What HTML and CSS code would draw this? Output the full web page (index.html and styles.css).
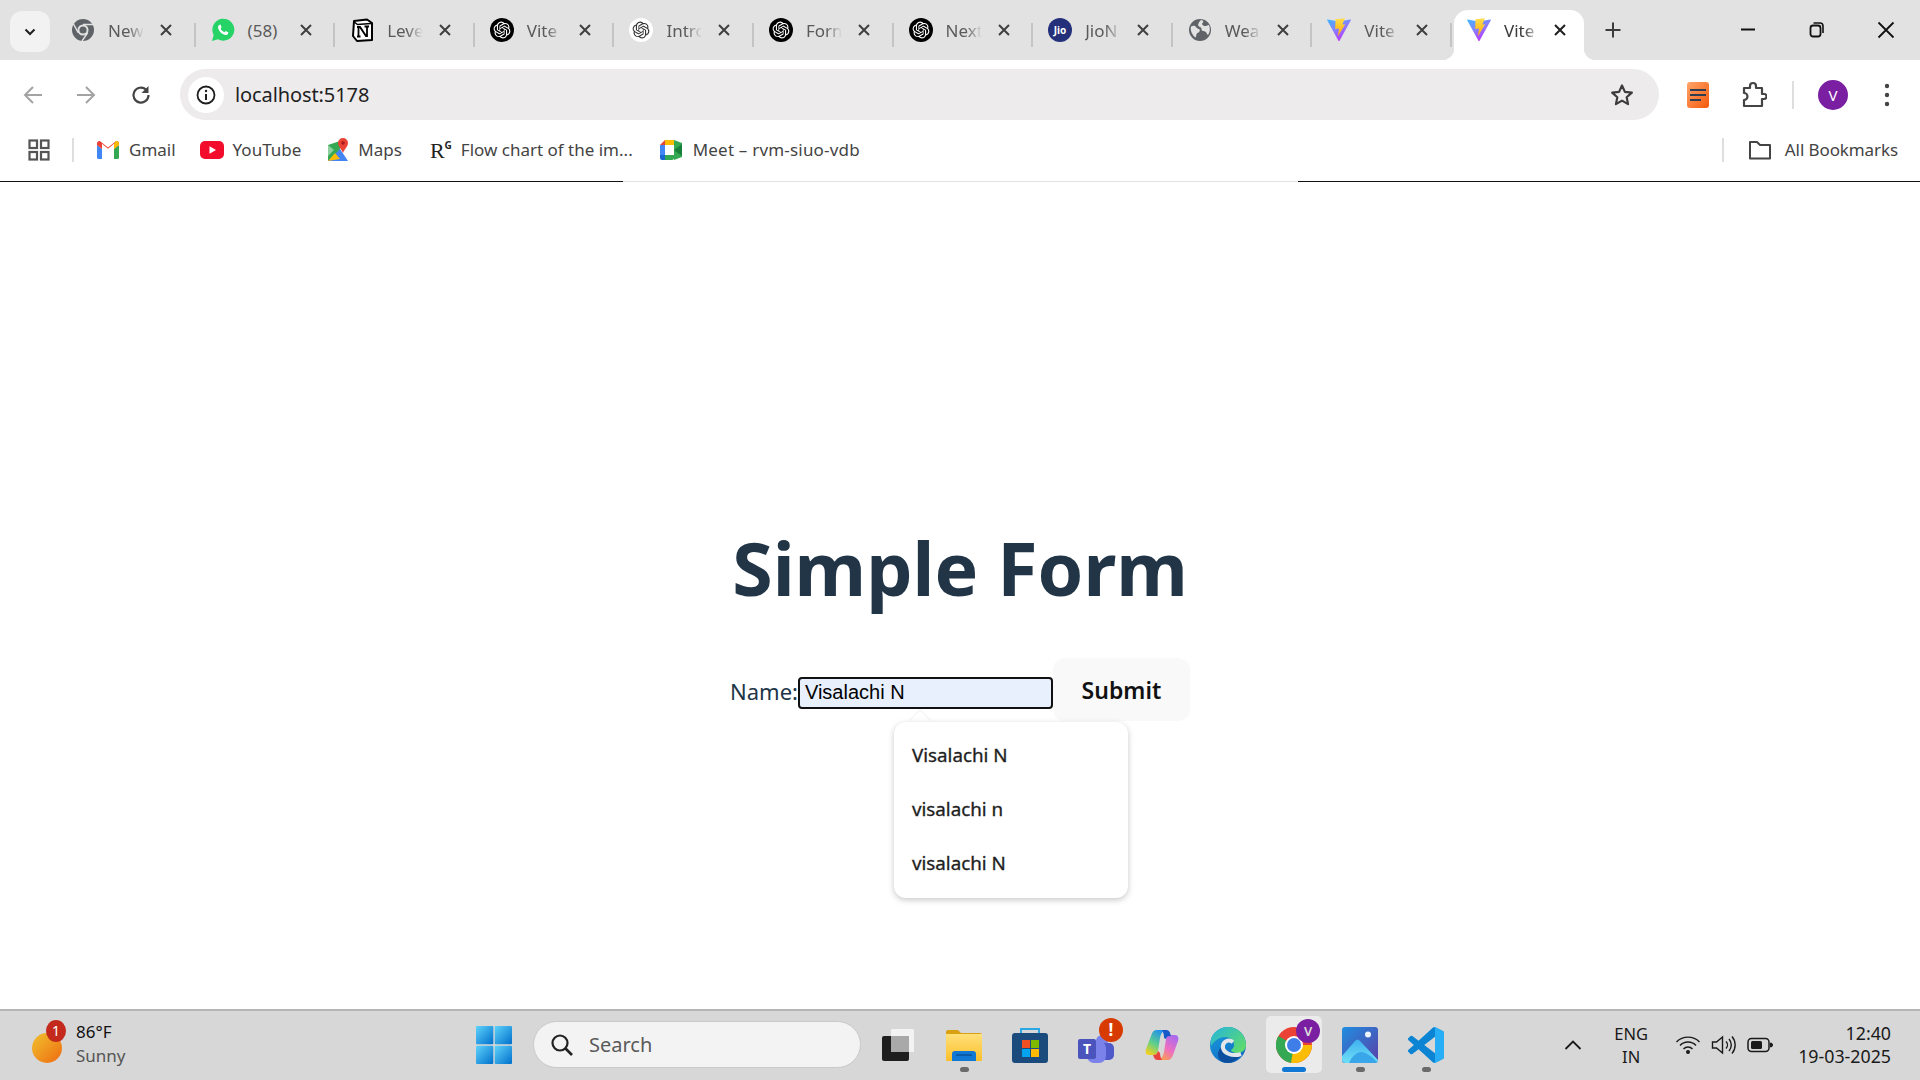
FILE: index.html
```html
<!DOCTYPE html>
<html lang="en">
<head>
<meta charset="utf-8">
<title>Vite + React</title>
<link rel="stylesheet" href="styles.css">
</head>
<body>
<svg class="defs" aria-hidden="true">
  <defs>
    <linearGradient id="viteA" x1="0" y1="0" x2=".55" y2="1"><stop offset="0" stop-color="#41b8ff"/><stop offset=".55" stop-color="#8a7bff"/><stop offset="1" stop-color="#bd34fe"/></linearGradient>
    <linearGradient id="viteB" x1="0" y1="0" x2="0" y2="1"><stop offset="0" stop-color="#ffdf50"/><stop offset="1" stop-color="#ffa800"/></linearGradient>
    <linearGradient id="winA" x1="0" y1="0" x2="1" y2="1"><stop offset="0" stop-color="#5fd3fb"/><stop offset="1" stop-color="#0070cc"/></linearGradient>
    <linearGradient id="folder" x1="0" y1="0" x2="0" y2="1"><stop offset="0" stop-color="#ffe07a"/><stop offset="1" stop-color="#fcbf2a"/></linearGradient>
    <linearGradient id="photo" x1="0" y1="0" x2="1" y2="1"><stop offset="0" stop-color="#1f8ee0"/><stop offset="1" stop-color="#5b3fa8"/></linearGradient>
    <linearGradient id="photoM" x1="0" y1="0" x2="0" y2="1"><stop offset="0" stop-color="#3fb0ee"/><stop offset="1" stop-color="#6fe0f8"/></linearGradient>
    <linearGradient id="copA" x1=".7" y1="0" x2=".2" y2="1"><stop offset="0" stop-color="#1f8ff0"/><stop offset=".55" stop-color="#5fd08a"/><stop offset="1" stop-color="#f6d01c"/></linearGradient>
    <linearGradient id="copB" x1=".8" y1="0" x2=".2" y2="1"><stop offset="0" stop-color="#a66af0"/><stop offset=".55" stop-color="#ee6fc0"/><stop offset="1" stop-color="#fba24a"/></linearGradient>
    <linearGradient id="edgeG" x1="0" y1="0" x2="1" y2=".8"><stop offset="0" stop-color="#25b5dc"/><stop offset="1" stop-color="#5fdc6a"/></linearGradient>
    <linearGradient id="edgeB" x1="0" y1="0" x2=".6" y2="1"><stop offset="0" stop-color="#1da0e2"/><stop offset="1" stop-color="#0f6cc0"/></linearGradient>
    <linearGradient id="orange" x1="0" y1="0" x2="1" y2="1"><stop offset="0" stop-color="#ffa56a"/><stop offset="1" stop-color="#f4590c"/></linearGradient>
    <path id="knot" d="M22.2819 9.8211a5.9847 5.9847 0 0 0-.5157-4.9108 6.0462 6.0462 0 0 0-6.5098-2.9A6.0651 6.0651 0 0 0 4.9807 4.1818a5.9847 5.9847 0 0 0-3.9977 2.9 6.0462 6.0462 0 0 0 .7427 7.0966 5.98 5.98 0 0 0 .511 4.9107 6.051 6.051 0 0 0 6.5146 2.9001A5.9847 5.9847 0 0 0 13.2599 24a6.0557 6.0557 0 0 0 5.7718-4.2058 5.9894 5.9894 0 0 0 3.9977-2.9001 6.0557 6.0557 0 0 0-.7475-7.0729zm-9.022 12.6081a4.4755 4.4755 0 0 1-2.8764-1.0408l.1419-.0804 4.7783-2.7582a.7948.7948 0 0 0 .3927-.6813v-6.7369l2.02 1.1686a.071.071 0 0 1 .038.052v5.5826a4.504 4.504 0 0 1-4.4945 4.4944zm-9.6607-4.1254a4.4708 4.4708 0 0 1-.5346-3.0137l.142.0852 4.783 2.7582a.7712.7712 0 0 0 .7806 0l5.8428-3.3685v2.3324a.0804.0804 0 0 1-.0332.0615L9.74 19.9502a4.4992 4.4992 0 0 1-6.1408-1.6464zM2.3408 7.8956a4.485 4.485 0 0 1 2.3655-1.9728V11.6a.7664.7664 0 0 0 .3879.6765l5.8144 3.3543-2.0201 1.1685a.0757.0757 0 0 1-.071 0l-4.8303-2.7865A4.504 4.504 0 0 1 2.3408 7.872zm16.5963 3.8558L13.1038 8.364 15.1192 7.2a.0757.0757 0 0 1 .071 0l4.8303 2.7913a4.4944 4.4944 0 0 1-.6765 8.1042v-5.6772a.79.79 0 0 0-.407-.667zm2.0107-3.0231l-.142-.0852-4.7735-2.7818a.7759.7759 0 0 0-.7854 0L9.409 9.2297V6.8974a.0662.0662 0 0 1 .0284-.0615l4.8303-2.7866a4.4992 4.4992 0 0 1 6.6802 4.66zM8.3065 12.863l-2.02-1.1638a.0804.0804 0 0 1-.038-.0567V6.0742a4.4992 4.4992 0 0 1 7.3757-3.4537l-.142.0805L8.704 5.459a.7948.7948 0 0 0-.3927.6813zm1.0976-2.3654l2.602-1.4998 2.6069 1.4998v2.9994l-2.5974 1.4997-2.6067-1.4997Z"/>
    <symbol id="i-openai" viewBox="0 0 24 24">
      <circle cx="12" cy="12" r="12" fill="#000"/>
      <use href="#knot" fill="#fff" transform="translate(3.6 3.6) scale(.7)"/>
    </symbol>
    <symbol id="i-vite" viewBox="0 0 24 24">
      <path d="M.8 1.500 11.800 3.500 23.200 1.500C23.800 1.500 24 2 23.700 2.600L12.700 22.600C12.300 23.300 11.700 23.300 11.300 22.600L.3 2.600C0 2 .2 1.500.8 1.500Z" fill="url(#viteA)"/>
      <path d="M8.500 1.300 18 .3 15.300 6.500 18.200 6.200 10.800 18.500 12 10.500 8.200 11Z" fill="url(#viteB)"/>
    </symbol>
    <symbol id="i-close" viewBox="0 0 14 14"><path d="M2 2 12 12M12 2 2 12" fill="none" stroke="currentColor" stroke-width="2"/></symbol>
  </defs>
</svg>

<header class="tabstrip">
  <button class="tablist-btn" type="button">
    <svg width="14" height="14" viewBox="0 0 14 14"><path d="M2.5 4.5 7 9l4.5-4.5" fill="none" stroke="#1f1f1f" stroke-width="2"/></svg>
  </button>
  <div class="tabs">
    <div class="tab">
      <svg class="fav" viewBox="0 0 24 24"><circle cx="12" cy="12" r="11" fill="#5f6368"/><circle cx="12" cy="12" r="5.500" fill="#e2e2e2"/><circle cx="12" cy="12" r="3.600" fill="#5f6368"/><path d="M12 6.500h10M7.200 14.700 2.500 6M16.800 14.700 11 23" stroke="#e2e2e2" stroke-width="1.400"/></svg>
      <span class="tab-title">New</span><svg class="tab-x"><use href="#i-close"/></svg>
    </div>
    <div class="tab">
      <svg class="fav" viewBox="0 0 24 24"><path d="M1 23l1.700-6A11 11 0 1 1 7 21.300Z" fill="#25d366"/><path d="M8.600 6.800c-.9.3-1.700 1.600-1.500 3 .4 3 3.800 6.600 7 7.200 1.500.3 2.700-.5 3-1.500l.2-1.200-2.700-1.300-1.200 1.300c-1.500-.5-3.200-2.200-3.800-3.700l1-1.300-1.100-2.700Z" fill="#fff"/></svg>
      <span class="tab-title tab-title-plain">(58)</span><svg class="tab-x"><use href="#i-close"/></svg>
    </div>
    <div class="tab">
      <svg class="fav" viewBox="0 0 24 24"><path d="M4 3 17 1.500 22 5v17l-15 1-4-5Z" fill="#fff" stroke="#000" stroke-width="2" stroke-linejoin="round"/><path d="M3.500 3.500 7.500 6.500 21 5.500" fill="none" stroke="#000" stroke-width="1.500"/><path d="M8.500 9v9.500M7 18.500h3.500M7 9H10l6 9h1V8.500M14.500 8.500H19" fill="none" stroke="#000" stroke-width="1.800"/></svg>
      <span class="tab-title">Leve</span><svg class="tab-x"><use href="#i-close"/></svg>
    </div>
    <div class="tab"><svg class="fav"><use href="#i-openai"/></svg><span class="tab-title">Vite</span><svg class="tab-x"><use href="#i-close"/></svg></div>
    <div class="tab">
      <svg class="fav" viewBox="0 0 24 24"><circle cx="12" cy="12" r="12" fill="#fff"/><use href="#knot" fill="#333" transform="translate(3.600 3.600) scale(.7)"/></svg>
      <span class="tab-title">Intro</span><svg class="tab-x"><use href="#i-close"/></svg>
    </div>
    <div class="tab"><svg class="fav"><use href="#i-openai"/></svg><span class="tab-title">Forn</span><svg class="tab-x"><use href="#i-close"/></svg></div>
    <div class="tab"><svg class="fav"><use href="#i-openai"/></svg><span class="tab-title">Next</span><svg class="tab-x"><use href="#i-close"/></svg></div>
    <div class="tab">
      <svg class="fav" viewBox="0 0 24 24"><circle cx="12" cy="12" r="12" fill="#24307a"/><text x="12" y="15.500" class="jio">Jio</text></svg>
      <span class="tab-title">JioN</span><svg class="tab-x"><use href="#i-close"/></svg>
    </div>
    <div class="tab">
      <svg class="fav" viewBox="0 0 24 24"><circle cx="12" cy="12" r="11" fill="#5f6368"/><path d="M3 8.500c2-1 4-1 5 .5s2.500 1.500 3.500 2.500-.5 3-2 3.500-1 4-2 4.500C4 17 2 12 3 8.500ZM13 2c3 .5 2.500 2 1.500 3S15 8 17 8s3-1.500 4-1c1.500 4 1 7-1 10-1.500-.5-1-3-3-3.500s-4-1-3.500-2.500-2-2-3-3S11 3.500 13 2Z" fill="#e2e2e2"/></svg>
      <span class="tab-title">Wea</span><svg class="tab-x"><use href="#i-close"/></svg>
    </div>
    <div class="tab"><svg class="fav"><use href="#i-vite"/></svg><span class="tab-title">Vite</span><svg class="tab-x"><use href="#i-close"/></svg></div>
    <div class="tab tab-active"><svg class="fav"><use href="#i-vite"/></svg><span class="tab-title">Vite</span><svg class="tab-x"><use href="#i-close"/></svg></div>
  </div>
  <svg class="newtab" width="18" height="18" viewBox="0 0 18 18"><path d="M9 1.500v15M1.500 9h15" stroke="#3c3c3c" stroke-width="2"/></svg>
  <div class="winctl">
    <svg width="18" height="18" viewBox="0 0 18 18"><path d="M2 8.500h14" stroke="#111" stroke-width="2"/></svg>
    <svg width="18" height="18" viewBox="0 0 18 18"><rect x="2.500" y="4.500" width="10" height="11" rx="2.500" fill="none" stroke="#111" stroke-width="1.800"/><path d="M5.500 2h6.500a3 3 0 0 1 3 3v7" fill="none" stroke="#111" stroke-width="1.600"/></svg>
    <svg width="18" height="18" viewBox="0 0 18 18"><path d="M1.500 1.500l15 15M16.500 1.500l-15 15" stroke="#111" stroke-width="1.800"/></svg>
  </div>
</header>

<nav class="toolbar">
  <svg class="tb-btn" viewBox="0 0 22 22"><path d="M20 11H3M11 3l-8 8 8 8" fill="none" stroke="#a3a3a3" stroke-width="2"/></svg>
  <svg class="tb-btn tb-fwd" viewBox="0 0 22 22"><path d="M2 11h17M11 3l8 8-8 8" fill="none" stroke="#a3a3a3" stroke-width="2"/></svg>
  <svg class="tb-btn tb-reload" viewBox="0 0 22 22"><path d="M18.500 11A7.500 7.500 0 1 1 16 5.500" fill="none" stroke="#444" stroke-width="2.200"/><path d="M18.500 2v7h-7Z" fill="#444"/></svg>
  <div class="omnibox">
    <span class="site-info"><svg width="22" height="22" viewBox="0 0 22 22"><circle cx="11" cy="11" r="8.500" fill="none" stroke="#1f1f1f" stroke-width="1.800"/><path d="M11 10v6" stroke="#1f1f1f" stroke-width="2"/><circle cx="11" cy="7" r="1.200" fill="#1f1f1f"/></svg></span>
    <span class="url">localhost:5178</span>
    <svg class="star" width="26" height="26" viewBox="0 0 24 24"><path d="M12 3.200l2.700 5.900 6.400.7-4.800 4.300 1.300 6.300L12 17.200l-5.600 3.200 1.300-6.300-4.800-4.300 6.400-.7Z" fill="none" stroke="#3c3c3c" stroke-width="2" stroke-linejoin="round"/></svg>
  </div>
  <svg class="ext-note" width="22" height="26" viewBox="0 0 22 26"><rect width="22" height="26" rx="3" fill="url(#orange)"/><path d="M3 8h16M3 13h16M3 18h11" stroke="#2c3e50" stroke-width="2"/></svg>
  <svg class="ext-puzzle" width="26" height="28" viewBox="0 0 26 28"><path d="M3 7h6V5a3 3 0 0 1 6 0v2h6v6h2a2.500 2.500 0 0 1 0 5h-2v7H3v-6a3.500 3.500 0 0 0 0-7Z" fill="none" stroke="#444" stroke-width="2.200" stroke-linejoin="round"/></svg>
  <span class="vsep tb-sep"></span>
  <span class="avatar">V</span>
  <svg class="menu-dots" width="6" height="26" viewBox="0 0 6 26"><circle cx="3" cy="4" r="2.200" fill="#444"/><circle cx="3" cy="13" r="2.200" fill="#444"/><circle cx="3" cy="22" r="2.200" fill="#444"/></svg>
</nav>

<div class="bookmarks">
  <svg class="apps" width="22" height="22" viewBox="0 0 22 22"><g fill="none" stroke="#555" stroke-width="2.200"><rect x="1.500" y="1.500" width="7.500" height="7.500"/><rect x="13" y="1.500" width="7.500" height="7.500"/><rect x="1.500" y="13" width="7.500" height="7.500"/><rect x="13" y="13" width="7.500" height="7.500"/></g></svg>
  <span class="vsep bm-sep"></span>
  <a class="bm bm-gmail"><svg width="22" height="18" viewBox="0 0 22 18"><path d="M0 4v12.500c0 .8.700 1.500 1.500 1.500H5V8Z" fill="#4285f4"/><path d="M22 4v12.500c0 .8-.7 1.500-1.500 1.500H17V8Z" fill="#34a853"/><path d="M5 8 0 4V2.500C0 .5 2-.5 3.500.5L11 6.500 18.500.5C20-.5 22 .5 22 2.500V4l-5 4V2.800L11 7.800 5 2.800Z" fill="#ea4335"/><path d="M17 2.800V8l5-4V2.500C22 .5 20-.5 18.500.5Z" fill="#fbbc04"/></svg><span>Gmail</span></a>
  <a class="bm bm-yt"><svg width="24" height="18" viewBox="0 0 24 18"><rect width="24" height="18" rx="5" fill="#f20d2c"/><path d="M9.500 5.200v7.600l6.500-3.800Z" fill="#fff"/></svg><span>YouTube</span></a>
  <a class="bm bm-maps"><svg width="22" height="24" viewBox="0 0 22 24"><path d="M1 7 13 3v18L1 23Z" fill="#34a853"/><path d="M1 23 13 11l8 12Z" fill="#4285f4"/><path d="M1 23 8 15l5 6Z" fill="#fbbc04"/><path d="M1 7l6 5-6 6Z" fill="#8fd19e"/><path d="M16 0a5 5 0 0 1 5 5c0 3.500-3.500 6-5 10-1.500-4-5-6.500-5-10a5 5 0 0 1 5-5Z" fill="#ea4335"/><circle cx="16" cy="5" r="1.800" fill="#a61c1c"/></svg><span>Maps</span></a>
  <a class="bm bm-rg"><span class="rg">R<sup class="rg-sup">G</sup></span><span>Flow chart of the im...</span></a>
  <a class="bm bm-meet"><svg width="22" height="20" viewBox="0 0 22 20"><path d="M0 5 5 0v5Z" fill="#ea4335"/><path d="M5 0h9v5H5Z" fill="#fbbc04"/><path d="M0 5h5v10H0Z" fill="#4285f4"/><path d="M0 15h5v5H2a2 2 0 0 1-2-2Z" fill="#1967d2"/><path d="M5 15h9v3a2 2 0 0 1-2 2H5Z" fill="#34a853"/><path d="M14 0v20l8-3V3Z" fill="#34a853"/><path d="M14 10l8-6v12Z" fill="#188038"/></svg><span>Meet – rvm-siuo-vdb</span></a>
  <span class="vsep bm-sep2"></span>
  <a class="bm bm-all"><svg width="24" height="20" viewBox="0 0 24 20"><path d="M2 2h7l3 3h10v13.500H2Z" fill="none" stroke="#444" stroke-width="2" stroke-linejoin="round"/></svg><span>All Bookmarks</span></a>
</div>

<div class="rule"></div>

<main class="page">
  <h1 class="title">Simple Form</h1>
  <form class="form">
    <label class="label" for="name">Name:</label>
    <span class="field">
      <input class="input" id="name" type="text" value="Visalachi N" readonly>
      <span class="popup-arrow"></span>
      <span class="popup">
        <span class="popup-item">Visalachi N</span>
        <span class="popup-item">visalachi n</span>
        <span class="popup-item">visalachi N</span>
      </span>
    </span>
    <button class="submit" type="button">Submit</button>
  </form>
</main>

<footer class="taskbar">
  <div class="weather">
    <span class="sun"><span class="sun-badge">1</span></span>
    <span class="weather-text"><span class="temp">86°F</span><span class="cond">Sunny</span></span>
  </div>
  <div class="task-center">
    <svg class="win" viewBox="0 0 36 38"><g fill="url(#winA)"><rect width="17.300" height="18.300" rx="1"/><rect x="18.700" width="17.300" height="18.300" rx="1"/><rect y="19.700" width="17.300" height="18.300" rx="1"/><rect x="18.700" y="19.700" width="17.300" height="18.300" rx="1"/></g></svg>
    <div class="search">
      <svg width="24" height="24" viewBox="0 0 24 24"><circle cx="10" cy="10" r="7.500" fill="none" stroke="#222" stroke-width="2.200"/><path d="M15.500 15.500 22 22" stroke="#222" stroke-width="2.600"/></svg>
      <span>Search</span>
    </div>
    <div class="apps-row">
      <span class="app"><svg viewBox="0 0 36 36"><rect x="2" y="9" width="27" height="25" rx="2" fill="#1e1e1e"/><rect x="11" y="2" width="23" height="23" rx="1" fill="#f5f5f5" opacity=".92"/><rect x="11" y="9" width="18" height="16" fill="#a9a9a9"/></svg></span>
      <span class="app app-run"><svg viewBox="0 0 36 36"><path d="M0 5a2 2 0 0 1 2-2h10l3 3h19a2 2 0 0 1 2 2v4H0Z" fill="#d9a012"/><path d="M0 7h36v26a1 1 0 0 1-1 1H1a1 1 0 0 1-1-1Z" fill="url(#folder)"/><path d="M6 34V27a3 3 0 0 1 3-3h18a3 3 0 0 1 3 3v7Z" fill="#0f78d4"/><rect x="10" y="27" width="16" height="2" fill="#0b5aa5"/></svg></span>
      <span class="app"><svg viewBox="0 0 36 36"><path d="M9 8V2h18v6" fill="none" stroke="#2aa8e6" stroke-width="2"/><rect y="6" width="36" height="30" rx="3" fill="#1b4a7d"/><rect x="10" y="13" width="8" height="8" fill="#f25022"/><rect x="19" y="13" width="8" height="8" fill="#7fba00"/><rect x="10" y="22" width="8" height="8" fill="#00a4ef"/><rect x="19" y="22" width="8" height="8" fill="#ffb900"/></svg></span>
      <span class="app"><svg viewBox="0 0 36 36"><circle cx="24" cy="14" r="6" fill="#7b83eb"/><rect x="18" y="16" width="18" height="17" rx="5" fill="#5059c9"/><rect x="9" y="14" width="19" height="22" rx="7" fill="#7b83eb"/><rect y="12" width="18" height="20" rx="2" fill="#4b53bc"/><text x="9" y="27" class="teams-t">T</text></svg><span class="app-alert">!</span></span>
      <span class="app"><svg viewBox="0 0 36 36"><path d="M12 3H22C18 4 17 7 16 11L14 24C13 28 12 28 8 28H5C2 28 1 25 2 22L7 9C8 5 10 3 12 3Z" fill="url(#copA)"/><path d="M24 33H14C18 32 19 29 20 25L22 12C23 8 24 8 28 8H31C34 8 35 11 34 14L29 28C28 31 26 33 24 33Z" fill="url(#copB)"/><path d="M18 3H22C25 3 26 5 27 9 24 9 23 9 22 12L20 11C20 7 19 5 18 3Z" fill="#1659c7"/><path d="M18 33H14C11 33 10 31 9 28 12 28 13 27 14 24L16 26C16 29 17 31 18 33Z" fill="#e8433c"/></svg></span>
      <span class="app"><svg viewBox="0 0 36 36"><circle cx="18" cy="18" r="18" fill="url(#edgeB)"/><path d="M1 12C3 5 10 0 18 0 28 0 36 8 36 18 36 23 32 26 27 26 24 26 21 25 21 23 22 22 24 21 24 18 24 13 20 10 15 10 9 10 4 14 1 19Z" fill="url(#edgeG)"/><path d="M12 20C11 27 19 33 32 28 27 33 22 36 18 36 12 36 8 33 8 27 8 24 10 21 12 20Z" fill="#0b4f9e"/><path d="M23 15C17 11 12 16 13 21 14 26 22 30 31 27" fill="none" stroke="#e3e6e8" stroke-width="4"/></svg></span>
      <span class="app app-chrome"><svg viewBox="0 0 36 36"><circle cx="18" cy="18" r="18" fill="#ea4335"/><path d="M18 18 2.400 9A18 18 0 0 0 18 36l6-9Z" fill="#34a853"/><path d="M18 18h18A18 18 0 0 1 15 35.800Z" fill="#fbbc04"/><circle cx="18" cy="18" r="9" fill="#fff"/><circle cx="18" cy="18" r="7" fill="#3f7ee8"/></svg><span class="chrome-badge">V</span><span class="chrome-bar"></span></span>
      <span class="app app-run"><svg viewBox="0 0 36 36"><rect width="36" height="36" rx="3" fill="url(#photo)"/><circle cx="26" cy="7.500" r="3" fill="#eef4fb"/><path d="M0 29 13 14c1.500-2 3.500-2 5 0L36 33a3 3 0 0 1-3 3H4a4 4 0 0 1-4-4Z" fill="url(#photoM)"/><path d="M7 36c3-7 8-11 12-11 3 0 10 3 16 10a3 3 0 0 1-2 1Z" fill="#3aa6ea"/></svg></span>
      <span class="app app-run"><svg viewBox="0 0 100 100"><path fill-rule="evenodd" d="M71 99.300a6.200 6.200 0 0 0 5-.2L96.500 89A6.250 6.250 0 0 0 100 83.400V16.600A6.250 6.250 0 0 0 96.500 11L75.900 1A6.200 6.200 0 0 0 68.800 2.200L29.400 38.200 12.200 25.100a4.200 4.200 0 0 0-5.300.2L1.400 30.300a4.200 4.200 0 0 0 0 6.200L16.300 50 1.400 63.500a4.200 4.200 0 0 0 0 6.200l5.500 5a4.200 4.200 0 0 0 5.300.2L29.400 61.800 68.800 97.800a6.200 6.200 0 0 0 2.200 1.500ZM75 27.300 45.100 50 75 72.700Z" fill="#0b84d4"/><path d="M71 99.300a6.200 6.200 0 0 0 5-.2L96.500 89A6.250 6.250 0 0 0 100 83.400V16.600A6.250 6.250 0 0 0 96.500 11L75.900 1A6.200 6.200 0 0 0 68.800 2.200C71.100.4 75 2 75 5.500V94.500C75 97.500 73 99.300 71 99.300Z" fill="#27aef6"/></svg></span>
    </div>
  </div>
  <div class="tray">
    <svg class="caret" width="18" height="12" viewBox="0 0 18 12"><path d="M1.500 10 9 2.500 16.500 10" fill="none" stroke="#1a1a1a" stroke-width="1.800"/></svg>
    <span class="lang"><span>ENG</span><span>IN</span></span>
    <span class="tray-icons">
      <svg width="26" height="20" viewBox="0 0 26 20"><g fill="none" stroke="#1a1a1a" stroke-width="1.400"><path d="M1.500 7a16 16 0 0 1 23 0"/><path d="M5 10.500a11 11 0 0 1 16 0"/><path d="M8.500 14a6 6 0 0 1 9 0"/></g><circle cx="13" cy="17" r="2" fill="#1a1a1a"/></svg>
      <svg width="26" height="20" viewBox="0 0 26 20"><path d="M1.500 7v6h4l6 5V2l-6 5Z" fill="none" stroke="#1a1a1a" stroke-width="1.400"/><path d="M15 6.500a5 5 0 0 1 0 7M18 4a9 9 0 0 1 0 12M21 1.500a13 13 0 0 1 0 17" fill="none" stroke="#1a1a1a" stroke-width="1.400"/></svg>
      <svg width="26" height="20" viewBox="0 0 26 20"><rect x="1" y="3.500" width="21" height="13" rx="3.500" fill="none" stroke="#1a1a1a" stroke-width="1.500"/><rect x="4" y="6" width="11" height="8" rx="1.500" fill="#1a1a1a"/><path d="M23.500 8v4a2 2 0 0 0 0-4Z" fill="#1a1a1a" stroke="#1a1a1a"/></svg>
    </span>
    <span class="clock"><span>12:40</span><span>19-03-2025</span></span>
  </div>
</footer>
</body>
</html>
```
FILE: styles.css
```css
* { box-sizing: border-box; }
html, body { height: 100%; }
body {
  margin: 0;
  height: 1080px;
  overflow: hidden;
  display: flex;
  flex-direction: column;
  background: #fff;
  font-family: "Noto Sans", "Open Sans", sans-serif;
  color: #213547;
}
.defs { display: block; width: 0; height: 0; overflow: hidden; }

/* tab strip */
.tabstrip {
  height: 60px;
  flex: none;
  display: flex;
  align-items: flex-start;
  background: #e2e2e2;
}
.tablist-btn {
  width: 40px;
  height: 41px;
  margin: 11px 0 0 10px;
  padding: 0;
  border: 0;
  border-radius: 12px;
  background: #f2f2f2;
  display: flex;
  align-items: center;
  justify-content: center;
}
.tabs { display: flex; margin-left: 5px; margin-top: 10px; isolation: isolate; }
.tab {
  position: relative;
  width: 139.6px;
  height: 50px;
  padding: 0 0 10px 16px;
  display: flex;
  align-items: center;
  color: #5a5a5a;
  font-size: 17px;
}
.tab::after {
  content: "";
  position: absolute;
  right: -1px;
  top: 13px;
  width: 2px;
  height: 24px;
  background: #c4c4c4;
}
.fav { width: 24px; height: 24px; flex: none; }
.tab-title {
  width: 36px;
  margin-left: 13px;
  white-space: nowrap;
  -webkit-mask-image: linear-gradient(90deg, #000 55%, transparent 100%);
  mask-image: linear-gradient(90deg, #000 55%, transparent 100%);
}
.tab-title-plain { -webkit-mask-image: none; mask-image: none; }
.tab-x { width: 14px; height: 14px; margin-left: 15px; color: #3f3f3f; flex: none; }
.tab-active {
  width: 130px;
  margin-left: 3px;
  padding-left: 13px;
  background: #fff;
  border-radius: 14px 14px 0 0;
  color: #3a3a3a;
  isolation: isolate;
}
.tab-active .tab-x { color: #1f1f1f; margin-left: 13px; }
.tab-active::after { display: none; }
.tab-active::before {
  content: "";
  position: absolute;
  left: -12px;
  right: -12px;
  bottom: 0;
  height: 12px;
  z-index: -1;
  background:
    radial-gradient(circle at 0 0, #e2e2e2 12px, transparent 12.5px) left bottom / 12px 12px no-repeat,
    radial-gradient(circle at 100% 0, #e2e2e2 12px, transparent 12.5px) right bottom / 12px 12px no-repeat,
    #fff;
}
.newtab { margin: 21px 0 0 20px; }
.winctl {
  margin-left: auto;
  margin-top: 21px;
  margin-right: 25px;
  width: 156px;
  display: flex;
  justify-content: space-between;
}

/* toolbar */
.toolbar {
  height: 60px;
  flex: none;
  display: flex;
  align-items: center;
  padding: 9px 0 0 22px;
  background: #fff;
  border-radius: 14px 14px 0 0;
  position: relative;
}
.tb-btn { width: 22px; height: 22px; flex: none; }
.tb-fwd { margin-left: 31px; }
.tb-reload { margin-left: 33px; }
.omnibox {
  margin-left: 28px;
  width: 1479px;
  height: 51px;
  flex: none;
  display: flex;
  align-items: center;
  padding: 0 24px 0 8px;
  border-radius: 26px;
  background: #edebec;
}
.site-info {
  width: 36px;
  height: 36px;
  border-radius: 50%;
  background: #fff;
  display: flex;
  align-items: center;
  justify-content: center;
  flex: none;
}
.url { margin-left: 11px; font-size: 20px; letter-spacing: -.1px; color: #1f1f1f; }
.star { margin-left: auto; }
.ext-note { margin-left: 28px; flex: none; }
.ext-puzzle { margin-left: 32px; flex: none; }
.vsep { display: block; width: 2px; background: #dedede; flex: none; }
.tb-sep { height: 28px; margin-left: 25px; }
.avatar {
  width: 30px;
  height: 30px;
  margin-left: 24px;
  border-radius: 50%;
  background: #7b1fa2;
  color: #fff;
  font-size: 15px;
  text-align: center;
  line-height: 30px;
  flex: none;
}
.menu-dots { margin-left: 36px; flex: none; }

/* bookmarks */
.bookmarks {
  height: 61px;
  flex: none;
  display: flex;
  align-items: center;
  padding: 0 22px 2px 28px;
  background: #fff;
  font-size: 17px;
  color: #444;
}
.apps { flex: none; }
.bm-sep { height: 24px; margin-left: 22px; }
.bm { display: flex; align-items: center; white-space: nowrap; }
.bm-gmail { margin-left: 23px; gap: 10px; }
.bm-yt { margin-left: 24px; gap: 9px; }
.bm-maps { margin-left: 26px; gap: 9px; }
.bm-rg { margin-left: 28px; gap: 9px; }
.rg { font-family: "Liberation Serif", serif; color: #222; font-size: 22px; line-height: 1; }
.rg-sup { font: 700 10px "Noto Sans", sans-serif; vertical-align: 9px; }
.bm-meet { margin-left: 27px; gap: 11px; }
.bm-meet span { letter-spacing: .2px; }
.bm-sep2 { height: 24px; margin-left: auto; }
.bm-all { margin-left: 24px; gap: 13px; }
.bm-all span { letter-spacing: -.1px; }

.rule {
  height: 1px;
  flex: none;
  background: linear-gradient(90deg, #111 623px, #e2e2e2 623px, #e2e2e2 1298px, #111 1298px);
}

/* page */
.page {
  flex: 1;
  min-height: 0;
  display: flex;
  flex-direction: column;
  align-items: center;
  padding-top: 343px;
}
.title {
  margin: 0;
  font-size: 73.4px;
  line-height: 86px;
  font-weight: 700;
  color: #213547;
}
.form {
  display: flex;
  align-items: center;
  margin-top: 47px;
  width: 460px;
}
.label { font-size: 22px; line-height: 1; color: #213547; margin-top: 2px; }
.field { position: relative; display: block; flex: none; margin-top: 6px; }
.input {
  display: block;
  width: 255px;
  height: 32px;
  padding: 0 5px;
  border: 2px solid #111;
  border-radius: 4px;
  background: #e8f0fe;
  color: #000;
  font: 20px "Liberation Sans", Arial, sans-serif;
  outline: 0;
}
.popup-arrow {
  position: absolute;
  left: 114px;
  top: 37px;
  width: 16px;
  height: 16px;
  background: #fff;
  transform: rotate(45deg);
  box-shadow: -1px -1px 2px rgba(0,0,0,.05);
}
.popup {
  position: absolute;
  left: 96px;
  top: 45px;
  width: 234px;
  height: 176px;
  padding: 6px 0;
  border-radius: 12px;
  background: #fff;
  box-shadow: 0 2px 6px rgba(0,0,0,.22);
  display: flex;
  flex-direction: column;
  z-index: 2;
}
.popup-item {
  height: 54px;
  padding-left: 18px;
  display: flex;
  align-items: center;
  font-size: 18.8px;
  font-weight: 400;
  -webkit-text-stroke: .35px #1f1f1f;
  color: #1f1f1f;
}
.submit {
  width: 137px;
  height: 63px;
  padding: 0;
  border: 0;
  border-radius: 12px;
  background: #f9f9f9;
  color: #111;
  font: 600 23px "Noto Sans", sans-serif;
}

/* taskbar */
.taskbar {
  height: 71px;
  flex: none;
  display: flex;
  align-items: center;
  padding-bottom: 2px;
  border-top: 2px solid #b5b5b5;
  background: #d7d7d7;
  position: relative;
}
.weather { display: flex; align-items: center; width: 476px; padding-left: 32px; flex: none; }
.sun {
  position: relative;
  width: 30px;
  height: 30px;
  margin-top: 6px;
  border-radius: 50%;
  background: linear-gradient(135deg, #f0c22e, #ef6a10);
  flex: none;
}
.sun-badge {
  position: absolute;
  left: 14px;
  top: -13px;
  width: 20px;
  height: 22px;
  border-radius: 50%;
  background: #c42a1c;
  color: #fff;
  font-size: 14px;
  line-height: 22px;
  text-align: center;
}
.weather-text { display: flex; flex-direction: column; margin: -2px 0 0 14px; font-size: 17px; line-height: 24px; }
.temp { color: #111; }
.cond { color: #555; }
.task-center { display: flex; align-items: center; flex: none; }
.win { width: 36px; height: 38px; flex: none; }
.search {
  width: 328px;
  height: 47px;
  margin-left: 21px;
  padding-left: 16px;
  display: flex;
  align-items: center;
  gap: 15px;
  border-radius: 24px;
  background: #f3f3f3;
  border: 1px solid #c9c9c9;
  color: #5a5a5a;
  font-size: 20px;
}
.apps-row { display: flex; margin-left: 4px; }
.app {
  position: relative;
  width: 66px;
  height: 57px;
  display: flex;
  align-items: center;
  justify-content: center;
}
.app svg { width: 36px; height: 36px; }
.app-run::after {
  content: "";
  position: absolute;
  left: 29px;
  bottom: 1px;
  width: 9px;
  height: 5px;
  border-radius: 3px;
  background: #6a6a6a;
}
.app-alert {
  position: absolute;
  right: 6px;
  top: 2px;
  width: 24px;
  height: 24px;
  border-radius: 50%;
  background: #d83b01;
  color: #fff;
  font-weight: 700;
  font-size: 17px;
  line-height: 24px;
  text-align: center;
}
.teams-t { font: 700 14px "Noto Sans", sans-serif; fill: #fff; text-anchor: middle; }
.jio { font: 700 10px "Noto Sans", sans-serif; fill: #fff; text-anchor: middle; }
.app-chrome::before {
  content: "";
  position: absolute;
  left: 5px;
  right: 5px;
  top: 0;
  bottom: 0;
  border-radius: 5px;
  background: #ebebeb;
}
.app-chrome svg { position: relative; }
.chrome-badge {
  position: absolute;
  left: 35px;
  top: 3px;
  width: 24px;
  height: 24px;
  border-radius: 50%;
  background: #7b1fa2;
  color: #ddd;
  font-size: 13px;
  font-weight: 600;
  line-height: 24px;
  text-align: center;
}
.chrome-bar {
  position: absolute;
  left: 21px;
  bottom: 1px;
  width: 24px;
  height: 5px;
  border-radius: 3px;
  background: #0f78d4;
}
.tray { margin-left: auto; display: flex; align-items: center; padding-right: 29px; color: #1a1a1a; }
.caret { flex: none; }
.lang {
  margin-left: 29px;
  width: 40px;
  display: flex;
  flex-direction: column;
  align-items: center;
  font-size: 16.5px;
  line-height: 23px;
}
.tray-icons { display: flex; gap: 10px; margin-left: 24px; }
.clock {
  margin-left: 25px;
  display: flex;
  flex-direction: column;
  align-items: flex-end;
  font-size: 17.8px;
  line-height: 23px;
}
```
